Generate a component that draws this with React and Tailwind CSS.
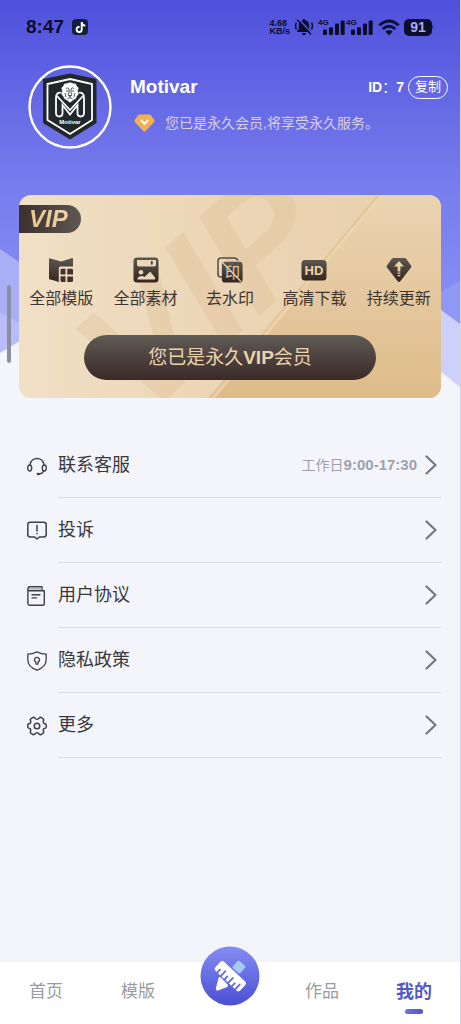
import { FaTiktok } from 'react-icons/fa6'

const features = [
  { label: '全部模版', Icon: TemplateIcon },
  { label: '全部素材', Icon: MaterialIcon },
  { label: '去水印', Icon: WatermarkIcon },
  { label: '高清下载', Icon: HdIcon },
  { label: '持续更新', Icon: UpdateIcon },
]

const menuItems = [
  { label: '联系客服', Icon: HeadsetIcon, href: '#service', hours: true },
  { label: '投诉', Icon: ComplaintIcon, href: '#complaint' },
  { label: '用户协议', Icon: AgreementIcon, href: '#agreement' },
  { label: '隐私政策', Icon: PrivacyIcon, href: '#privacy' },
  { label: '更多', Icon: MoreIcon, href: '#more' },
]

/* Feature icons */
function DarkGradient({ id }) {
  return (
    <defs>
      <linearGradient id={id} x1="0" y1="0" x2="0" y2="1">
        <stop offset="0" stopColor="#5c5752" />
        <stop offset="1" stopColor="#35251f" />
      </linearGradient>
    </defs>
  )
}

function TemplateIcon() {
  return (
    <svg viewBox="0 0 26 26" className="size-[26px]" aria-hidden="true">
      <DarkGradient id="tpl" />
      <path d="M1 2.4Q1 1 2.5 1.4Q8 3 13 4.6Q18 3 23.5 1.2Q25 .8 25 2.4V9.5H12.3Q10.8 9.5 10.8 11V25Q6 23 2 22.5Q1 22.4 1 21.4Z" fill="url(#tpl)" />
      <path d="M13.8 11.8H17.5V17.4H12.5V13Q12.5 11.8 13.8 11.8ZM19.3 11.8H23.8Q25 11.8 25 13V17.6H19.3ZM12.5 19.2H17.5V25H13.8Q12.5 25 12.5 23.8ZM19.3 19.4H25V23.8Q25 25 23.8 25H19.3Z" fill="#42332d" />
    </svg>
  )
}

function MaterialIcon() {
  return (
    <svg viewBox="0 0 26 26" className="size-[26px]" aria-hidden="true">
      <DarkGradient id="mat" />
      <rect x=".5" y=".5" width="25" height="25" rx="3.5" fill="url(#mat)" />
      <path d="M4 3H23V7.5Q23 9.5 21 9.5H6Q4 9.5 4 7.5Z" fill="#ead6b8" />
      <rect x="17.8" y="4" width="2" height="3.8" rx="1" fill="#4d433e" />
      <circle cx="8" cy="15.3" r="2.3" fill="#ead6b8" />
      <path d="M4.5 22.5V21Q8 17.5 11.5 20L16.5 15.3Q17.3 14.6 18 15.4L22 20.5V22.5Z" fill="#ead6b8" />
    </svg>
  )
}

function WatermarkIcon() {
  return (
    <svg viewBox="0 0 26 26" className="size-[26px]" aria-hidden="true">
      <DarkGradient id="wm" />
      <path d="M5 20H4Q1 20 1 17V4Q1 1 4 1H17Q20 1 21 3.5" fill="none" stroke="#544b46" strokeWidth="1.5" />
      <path d="M8 4.8H22.5Q25.6 4.8 25.6 7.9V22.5Q25.6 25.6 22.5 25.6H8Q4.9 25.6 4.9 22.5V7.9Q4.9 4.8 8 4.8Z" fill="url(#wm)" />
      <text x="15.5" y="20.5" textAnchor="middle" fontSize="15" fontFamily="Noto Sans CJK SC, sans-serif" fill="#e3cba8">印</text>
      <path d="M4 4L24 24.5" stroke="#e3cba8" strokeWidth="1.4" />
    </svg>
  )
}

function HdIcon() {
  return (
    <svg viewBox="0 0 26 26" className="size-[26px]" aria-hidden="true">
      <DarkGradient id="hd" />
      <rect x=".5" y="3" width="25" height="20.5" rx="3.5" fill="url(#hd)" />
      <text x="13" y="17.8" textAnchor="middle" fontSize="13" fontFamily="Liberation Sans, sans-serif" fontWeight="700" fill="#ead2ac">HD</text>
    </svg>
  )
}

function UpdateIcon() {
  return (
    <svg viewBox="0 0 26 26" className="size-[26px]" aria-hidden="true">
      <DarkGradient id="upd" />
      <path d="M6 1.5Q6.6 1 7.5 1H18.5Q19.4 1 20 1.5L25 8.5Q25.8 9.6 25 10.6L14.3 24.3Q13 25.6 11.7 24.3L1 10.6Q.2 9.6 1 8.5Z" fill="url(#upd)" />
      <path d="M13 4L18 9.6H14.4V14.6H11.6V9.6H8Z" fill="#ead2ac" />
      <path d="M11.6 16.2H14.4M11.6 18.6H14.4" stroke="#ead2ac" strokeWidth="1.2" />
    </svg>
  )
}

/* Menu icons */
function HeadsetIcon() {
  return (
    <svg viewBox="0 0 20 20" className="size-5 overflow-visible" fill="none" stroke="#3f3f46" strokeWidth="1.4" strokeLinecap="round" aria-hidden="true">
      <path d="M3.2 9V8.2A6.9 6.9 0 0 1 16.8 8.2V9" />
      <ellipse cx="2.7" cy="12" rx="2" ry="3" />
      <ellipse cx="17.3" cy="12" rx="2" ry="3" />
      <path d="M16.7 15Q15.5 17.7 12.3 18" />
      <ellipse cx="11.3" cy="18" rx="1.7" ry="1.2" fill="#3f3f46" stroke="none" />
    </svg>
  )
}

function ComplaintIcon() {
  return (
    <svg viewBox="0 0 20 20" className="size-5" fill="none" stroke="#3f3f46" strokeWidth="1.5" strokeLinecap="round" strokeLinejoin="round" aria-hidden="true">
      <path d="M3.3 1.2H16.7Q19.2 1.2 19.2 3.7V13.6Q19.2 16 16.7 16H12.3L10 18L7.7 16H3.3Q.8 16 .8 13.6V3.7Q.8 1.2 3.3 1.2Z" />
      <path d="M10 4.6V10M10 12.5V12.7" />
    </svg>
  )
}

function AgreementIcon() {
  return (
    <svg viewBox="0 0 20 20" className="size-5" fill="none" stroke="#3f3f46" strokeWidth="1.4" strokeLinecap="round" strokeLinejoin="round" aria-hidden="true">
      <path d="M.9 3V17.6Q.9 19.2 2.5 19.2H15.5Q17.3 19.2 17.3 17.4V4.8H2.5Q.9 4.8 .9 3Q.9 .8 2.7 .8H15V4.5" />
      <path d="M2.5 2.9H14.5" stroke="#a1a1aa" />
      <path d="M5 8.8H13M5 11.9H9.5" />
    </svg>
  )
}

function PrivacyIcon() {
  return (
    <svg viewBox="0 0 20 20" className="size-5" fill="none" stroke="#3f3f46" strokeWidth="1.3" strokeLinecap="round" strokeLinejoin="round" aria-hidden="true">
      <path d="M10 .8Q14.5 3.1 19.2 3.2V8.5Q19.2 16 10 19.2Q.8 16 .8 8.5V3.2Q5.5 3.1 10 .8Z" />
      <path d="M9 11.2A2.5 2.5 0 1 1 11 11.2V12.8Q10 13.9 9 12.8Z" />
    </svg>
  )
}

function MoreIcon() {
  return (
    <svg viewBox="0 0 20 20" className="size-5" fill="none" stroke="#3f3f46" strokeWidth="1.5" strokeLinejoin="round" aria-hidden="true">
      <path d="M6.5 1.2Q7.3 1.2 7.8 2Q8.500 3.3 10 3.3Q11.5 3.3 12.2 2Q12.7 1.2 13.5 1.2L16.3 2.9Q16.9 3.6 16.5 4.6Q15.6 7.2 18 7.7Q19.2 8 19.3 9V11Q19.2 12 18 12.3Q15.6 12.8 16.5 15.4Q16.9 16.4 16.3 17.1L13.5 18.8Q12.7 18.8 12.2 18Q11.5 16.7 10 16.7Q8.5 16.7 7.8 18Q7.3 18.8 6.5 18.8L3.7 17.1Q3.1 16.4 3.5 15.4Q4.4 12.8 2 12.3Q.8 12 .7 11V9Q.8 8 2 7.7Q4.4 7.2 3.5 4.6Q3.1 3.6 3.7 2.9Z" />
      <circle cx="10" cy="10" r="2.8" />
    </svg>
  )
}

function SignalIcon() {
  return (
    <svg viewBox="0 0 28 18" className="h-[18px] w-7" aria-hidden="true">
      <text x="0" y="7" fontSize="8" fontFamily="Liberation Sans, sans-serif" fontWeight="700" fill="#0c0d2b">4G</text>
      <g fill="#0c0d2b">
        <rect x="5" y="11.5" width="4" height="5.5" rx="1" />
        <rect x="11" y="9.3" width="4" height="7.7" rx="1" />
        <rect x="17" y="5.5" width="4" height="11.5" rx="1" />
        <rect x="22.7" y="2.5" width="4" height="14.5" rx="1" />
      </g>
    </svg>
  )
}

function StatusBar() {
  return (
    <div className="flex h-[54px] items-center justify-between px-[26px] text-[#0c0d2b]">
      <div className="flex items-center gap-2">
        <span className="text-[19px] leading-6 font-bold">8:47</span>
        <span className="flex size-4 items-center justify-center rounded bg-[#14203a] text-white">
          <FaTiktok className="size-[11px]" />
        </span>
      </div>
      <div className="flex items-center">
        <div className="mr-1 text-[9px] leading-[8px] font-bold">
          <div>4.68</div>
          <div>KB/s</div>
        </div>
        <svg viewBox="0 0 20 18" className="mr-1 h-[18px] w-5" aria-hidden="true">
          <path d="M10 1Q11.3 1 11.3 2.3Q15.2 3.2 15.2 7.5V11L17 13V14H3V13L4.8 11V7.5Q4.8 3.2 8.7 2.3Q8.7 1 10 1ZM7.8 15H12.2Q11.7 17.2 10 17.2Q8.3 17.2 7.8 15Z" fill="#0c0d2b" />
          <path d="M2.4 4.5Q.8 8 2.4 11.5M17.6 4.5Q19.2 8 17.6 11.5" fill="none" stroke="#0c0d2b" strokeWidth="1.5" />
          <path d="M4.5 1L18.5 16" stroke="#5a5be0" strokeWidth="1.5" />
          <path d="M3.2 1.8L17 16.5" stroke="#0c0d2b" strokeWidth="1.5" />
        </svg>
        <SignalIcon />
        <SignalIcon />
        <svg viewBox="0 0 22 17" className="mx-1 h-[17px] w-[22px]" fill="none" stroke="#0c0d2b" strokeWidth="2.8" aria-hidden="true">
          <path d="M1.3 6.3Q11 -2.3 20.7 6.3M4.7 10Q11 4.4 17.3 10" />
          <path d="M7.3 12.5Q11 9.5 14.7 12.5L11 16.5Z" fill="#0c0d2b" stroke="none" />
        </svg>
        <span className="flex h-[17px] w-7 items-center justify-center rounded-[5px] bg-[#0c0d2b] text-[14px] leading-none font-bold text-[#a9acf5]">91</span>
        <span className="h-1 w-0.5 rounded-r bg-[#34369a]" />
      </div>
    </div>
  )
}

function Avatar() {
  return (
    <svg viewBox="0 0 84 84" className="size-[84px] shrink-0" role="img" aria-label="Motivar">
      <circle cx="42" cy="42" r="40.5" fill="none" stroke="#fff" strokeWidth="2.4" />
      <path d="M42 8.5L68.5 14V58L42 74.5L15 58V14Z" fill="#222829" />
      <path d="M42 14L64 19V55L42 69L19.5 55V19Z" fill="none" stroke="#fff" strokeWidth="1.8" />
      {/* M emblem */}
      <path d="M34 28Q28 26.5 28 33V48Q28 51.5 31.5 51.5Q34.5 51.5 34.5 48V40L42 49.5L49.5 40V48Q49.5 51.5 52.5 51.5Q56 51.5 56 48V33Q56 26.5 50 28" fill="none" stroke="#fff" strokeWidth="1.8" />
      <path d="M29 31L42 45L55 31" fill="none" stroke="#fff" strokeWidth="1.8" />
      {/* mane and face */}
      <path d="M42 17L45 18L48 18.5L49 21L51 23L50 26L51 29L49 31.5L48 34L45 35.5L42 38L39 35.5L36 34L35 31.5L33 29L34 26L33 23L35 21L36 18.5L39 18Z" fill="#fff" stroke="#222829" strokeWidth=".6" />
      <path d="M38 23.5Q39.5 22 41 24V28L40 30M46 23.5Q44.5 22 43 24V28L44 30M38 26H40.2M43.8 26H46M40.5 30.5H43.5L42 31.8ZM39.5 33.5Q42 32 44.5 33.5M37 28L38 32M47 28L46 32" fill="none" stroke="#222829" strokeWidth=".8" />
      <text x="42" y="58.5" textAnchor="middle" fontSize="6" fontFamily="Liberation Sans, sans-serif" fontWeight="700" fill="#fff">Motivar</text>
    </svg>
  )
}

function Profile() {
  return (
    <div className="flex pt-[11px] pr-3 pl-7 text-white">
      <Avatar />
      <div className="ml-[18px] min-w-0 flex-1 pt-2.5">
        <div className="flex h-6 items-center justify-between">
          <h1 className="text-[19px] leading-6 font-bold">Motivar</h1>
          <div className="flex items-center">
            <span className="text-[14px] leading-5 font-bold">ID</span>
            <span className="text-[14px] leading-5">：</span>
            <span className="mr-1 text-[14px] leading-5 font-bold">7</span>
            <button type="button" className="h-[23px] rounded-full border border-white px-1.5 text-[13px] leading-5">复制</button>
          </div>
        </div>
        <div className="mt-3.5 flex items-center gap-2.5 pl-1">
          <svg viewBox="0 0 21 18" className="h-[18px] w-[21px]" aria-hidden="true">
            <path d="M5.5 .5H15.5Q16.5 .5 17 1.3L20.3 6Q21 7 20.2 8L11.7 17Q10.5 18 9.3 17L.8 8Q0 7 .7 6L4 1.3Q4.5 .5 5.5 .5Z" fill="#f4b14a" />
            <path d="M7.3 6.5L10.5 9.8L13.7 6.5" fill="none" stroke="#fff" strokeWidth="1.8" strokeLinecap="round" strokeLinejoin="round" />
          </svg>
          <p className="text-[14px] leading-5 text-[#d9cfe4]">您已是永久会员,将享受永久服务。</p>
        </div>
      </div>
    </div>
  )
}

function CardBackdrop() {
  return (
    <svg viewBox="0 0 422 204" preserveAspectRatio="xMidYMid slice" className="absolute inset-0 size-full" aria-hidden="true">
      <defs>
        <linearGradient id="cardLeft" x1="0" y1="0" x2="1" y2="0">
          <stop offset="0" stopColor="#f0e0c6" />
          <stop offset=".45" stopColor="#ecd6b6" />
          <stop offset="1" stopColor="#e8cfab" />
        </linearGradient>
        <linearGradient id="cardRight" x1="0" y1="0" x2="0" y2="1">
          <stop offset="0" stopColor="#ead4b3" />
          <stop offset="1" stopColor="#dfbb89" />
        </linearGradient>
      </defs>
      <rect width="422" height="204" fill="url(#cardLeft)" />
      <text x="122" y="228" transform="rotate(-42 122 228)" fontSize="165" fontFamily="Liberation Sans, sans-serif" fontWeight="700" fontStyle="italic" fill="#dcb890" fillOpacity=".3">VIP</text>
      <path d="M361 0H422V204H191L320 50Z" fill="url(#cardRight)" />
      <path d="M360 0L318 50L190 204" fill="none" stroke="#d8b78a" strokeWidth="2" strokeOpacity=".5" />
      <path d="M363 0L321 50L194 204" fill="none" stroke="#f2d6ab" strokeWidth="3" strokeOpacity=".7" />
    </svg>
  )
}

function VipCard() {
  return (
    <section className="relative mx-[19px] mt-[46px] overflow-hidden rounded-xl">
      <CardBackdrop />
      <div className="relative pt-2.5 pb-[18px]">
        <div className="flex h-7 w-[62px] items-center rounded-r-full bg-linear-to-r from-[#3b302d] to-[#605753] pl-2.5">
          <span className="bg-linear-to-r from-[#e6c88f] to-[#ecd5aa] bg-clip-text pr-1 text-[24px] leading-7 font-bold text-transparent italic">VIP</span>
        </div>
        <ul className="mt-6 grid grid-cols-5">
          {features.map(({ label, Icon }) => (
            <li key={label} className="flex flex-col items-center gap-1">
              <Icon />
              <span className="text-[16px] leading-6 whitespace-nowrap text-[#40342e]">{label}</span>
            </li>
          ))}
        </ul>
        <div className="mt-6 px-[65px]">
          <button type="button" className="h-[45px] w-full rounded-full bg-linear-to-b from-[#5f5b55] to-[#3a2a28] text-[19px] leading-6 text-[#ead3ad]">
            您已是永久<span className="font-bold">VIP</span>会员
          </button>
        </div>
      </div>
    </section>
  )
}

function Menu() {
  return (
    <ul className="mt-[35px] px-[19px]">
      {menuItems.map(({ label, Icon, href, hours }) => (
        <li key={label}>
          <a href={href} className="flex h-[65px] items-stretch">
            <span className="flex w-[39px] items-center pl-2">
              <Icon />
            </span>
            <span className="flex flex-1 items-center border-b border-[#d9dae2] pr-1">
              <span className="flex-1 text-[18px] leading-6 text-[#38383e]">{label}</span>
              {hours && (
                <span className="mr-2 text-[14px] leading-5 text-[#a0a1a8]">
                  工作日<span className="text-[15px] font-bold">9:00-17:30</span>
                </span>
              )}
              <svg viewBox="0 0 12 20" className="h-5 w-3" fill="none" stroke="#77777e" strokeWidth="2.2" strokeLinecap="round" strokeLinejoin="round" aria-hidden="true">
                <path d="M1.5 1.5L10.5 10L1.5 18.5" />
              </svg>
            </span>
          </a>
        </li>
      ))}
    </ul>
  )
}

function TabBar() {
  const tab = 'flex flex-col items-center pt-[18px] text-[17px] leading-6 text-[#9b9b9f]'
  return (
    <nav className="mt-auto grid h-[62px] grid-cols-5 bg-white">
      <a href="#home" className={tab}>首页</a>
      <a href="#templates" className={tab}>模版</a>
      <a href="#create" aria-label="创作" className="-mt-4 flex justify-center">
        <svg viewBox="0 0 60 60" className="size-[60px]" aria-hidden="true">
          <defs>
            <linearGradient id="create" x1="0" y1="0" x2="0" y2="1">
              <stop offset="0" stopColor="#838df3" />
              <stop offset="1" stopColor="#4b4fd3" />
            </linearGradient>
          </defs>
          <circle cx="30" cy="30" r="29.5" fill="url(#create)" />
          <rect x="34" y="16" width="10" height="10" rx="1.5" transform="rotate(42 39 21)" fill="#a8c8fa" />
          <path d="M18.5 32Q19.5 30.5 21 31.5L27.5 38.5Q28.5 40 27 41L18 44.5Q15.5 45 15.8 42.5Z" fill="#fff" />
          <g transform="rotate(43 30.5 30)">
            <rect x="13.5" y="24" width="34" height="12.5" rx="2.5" fill="#fff" />
            <path d="M18.5 37V32.5M23.5 37V30M28.5 37V32.5M33.5 37V30M38.5 37V32.5M43 37V30" stroke="#676de2" strokeWidth="1.9" strokeLinecap="round" />
          </g>
        </svg>
      </a>
      <a href="#works" className={tab}>作品</a>
      <a href="#me" aria-current="page" className="flex flex-col items-center pt-[18px] text-[18px] leading-6 font-bold text-[#5558c8]">
        我的
        <span className="mt-[5px] h-[5px] w-[18px] rounded-full bg-linear-to-r from-[#6b72e0] to-[#5457bd]" />
      </a>
    </nav>
  )
}

export default function App() {
  return (
    <div className="relative isolate flex min-h-screen flex-col border-r border-[#d5d6df] bg-[#f4f5fb] font-['Liberation_Sans','Noto_Sans_CJK_SC',sans-serif]">
      <svg viewBox="0 0 461 400" preserveAspectRatio="none" className="absolute inset-x-0 top-0 -z-10 h-[400px] w-full" aria-hidden="true">
        <defs>
          <linearGradient id="sky" x1="0" y1="0" x2="0" y2="1">
            <stop offset="0" stopColor="#4f50dc" />
            <stop offset=".45" stopColor="#767ced" />
            <stop offset=".75" stopColor="#858df5" />
            <stop offset="1" stopColor="#8b94f7" />
          </linearGradient>
        </defs>
        <path d="M0 0H461V400H0Z" fill="url(#sky)" />
        <path d="M0 249L40 276L230 400H0Z" fill="#a9aff6" />
        <path d="M461 281L400 316V400H461Z" fill="#9098f5" />
        <path d="M0 312L40 335V400H0Z" fill="#b6bdf8" />
        <path d="M461 324L430 301L380 280V400H461Z" fill="#cdd1f9" />
        <path d="M0 353L20 341L60 330H380L442 372L461 387V400H0Z" fill="#f4f5fb" />
      </svg>
      <div className="absolute top-[285px] left-[7px] h-[78px] w-1 rounded-full bg-[#8d8f9f]" />
      <StatusBar />
      <Profile />
      <VipCard />
      <Menu />
      <TabBar />
    </div>
  )
}
